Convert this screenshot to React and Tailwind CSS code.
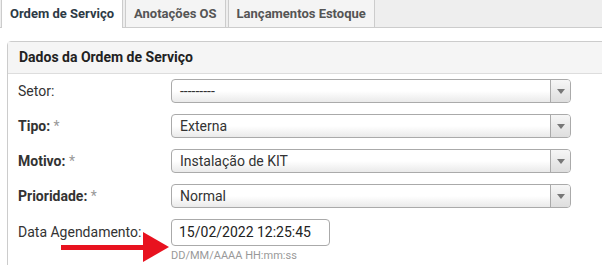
import React from "react";

const fields = [
  { label: "Setor:", value: "---------", required: false },
  { label: "Tipo:", value: "Externa", required: true },
  { label: "Motivo:", value: "Instalação de KIT", required: true },
  { label: "Prioridade:", value: "Normal", required: true },
];

function Select({ value }) {
  return (
    <div className="flex h-[24px] w-[400px] rounded-[4px] border border-[#aaa] bg-gradient-to-b from-white from-50% to-[#eaeaea] overflow-hidden">
      <div className="flex-1 flex items-center pl-[8px] text-[14px] text-[#333]">
        {value}
      </div>
      <div className="w-[20px] border-l border-[#aaa] flex items-center justify-center bg-gradient-to-b from-[#f6f6f6] to-[#dedede]">
        <div className="w-0 h-0 border-l-[4px] border-r-[4px] border-t-[5px] border-l-transparent border-r-transparent border-t-[#777]" />
      </div>
    </div>
  );
}

function Row({ label, required, children }) {
  return (
    <div className="flex items-center">
      <div className="w-[153px] text-[14px] text-[#333]">
        {required ? (
          <>
            <span className="font-bold">{label}</span>
            <span className="text-[#999]"> *</span>
          </>
        ) : (
          label
        )}
      </div>
      {children}
    </div>
  );
}

export default function App() {
  return (
    <div className="relative w-[602px] h-[265px] overflow-hidden bg-white font-['Roboto',sans-serif]">
      {/* Tabs */}
      <div className="flex h-[28px] bg-[#eeeeee] border-b border-[#cccccc] pl-[1px] gap-[2px]">
        <div className="h-[28px] px-[8px] flex items-center bg-white border-x border-[#cccccc] text-[13px] font-bold text-[#2d3a45]">
          Ordem de Serviço
        </div>
        <div className="h-[27px] px-[8px] flex items-center bg-[#f4f4f4] border-x border-[#cccccc] text-[13px] font-bold text-[#555]">
          Anotações OS
        </div>
        <div className="h-[27px] px-[8px] flex items-center bg-[#f4f4f4] border-x border-[#cccccc] text-[13px] font-bold text-[#555]">
          Lançamentos Estoque
        </div>
      </div>

      {/* Panel */}
      <div className="ml-[7px] mt-[13px] w-[620px] border border-[#cccccc] rounded-t-[4px]">
        <div className="h-[32px] flex items-center px-[11px] bg-[#f5f5f5] border-b border-[#dddddd] text-[14px] font-bold text-[#222]">
          Dados da Ordem de Serviço
        </div>
        <div className="flex flex-col gap-[11px] pt-[5px] pl-[10px] pb-[20px]">
          {fields.map((f) => (
            <Row key={f.label} label={f.label} required={f.required}>
              <Select value={f.value} />
            </Row>
          ))}
          <div className="flex items-start">
            <div className="w-[153px] h-[27px] flex items-center text-[14px] text-[#333]">
              Data Agendamento:
            </div>
            <div>
              <div className="w-[159px] h-[27px] flex items-center pl-[7px] rounded-[4px] border border-[#aaa] bg-white text-[14px] text-[#222]">
                15/02/2022 12:25:45
              </div>
              <div className="mt-[3px] text-[11px] leading-[14px] text-[#999]">
                DD/MM/AAAA HH:mm:ss
              </div>
            </div>
          </div>
        </div>
      </div>

      {/* Red arrow annotation */}
      <svg
        className="absolute left-[58px] top-[230px]"
        width="116"
        height="34"
        viewBox="0 0 116 34"
      >
        <rect x="3" y="15" width="87" height="5" fill="#e8121f" />
        <polygon points="85,2 111,17 85,32" fill="#e8121f" />
      </svg>
    </div>
  );
}
